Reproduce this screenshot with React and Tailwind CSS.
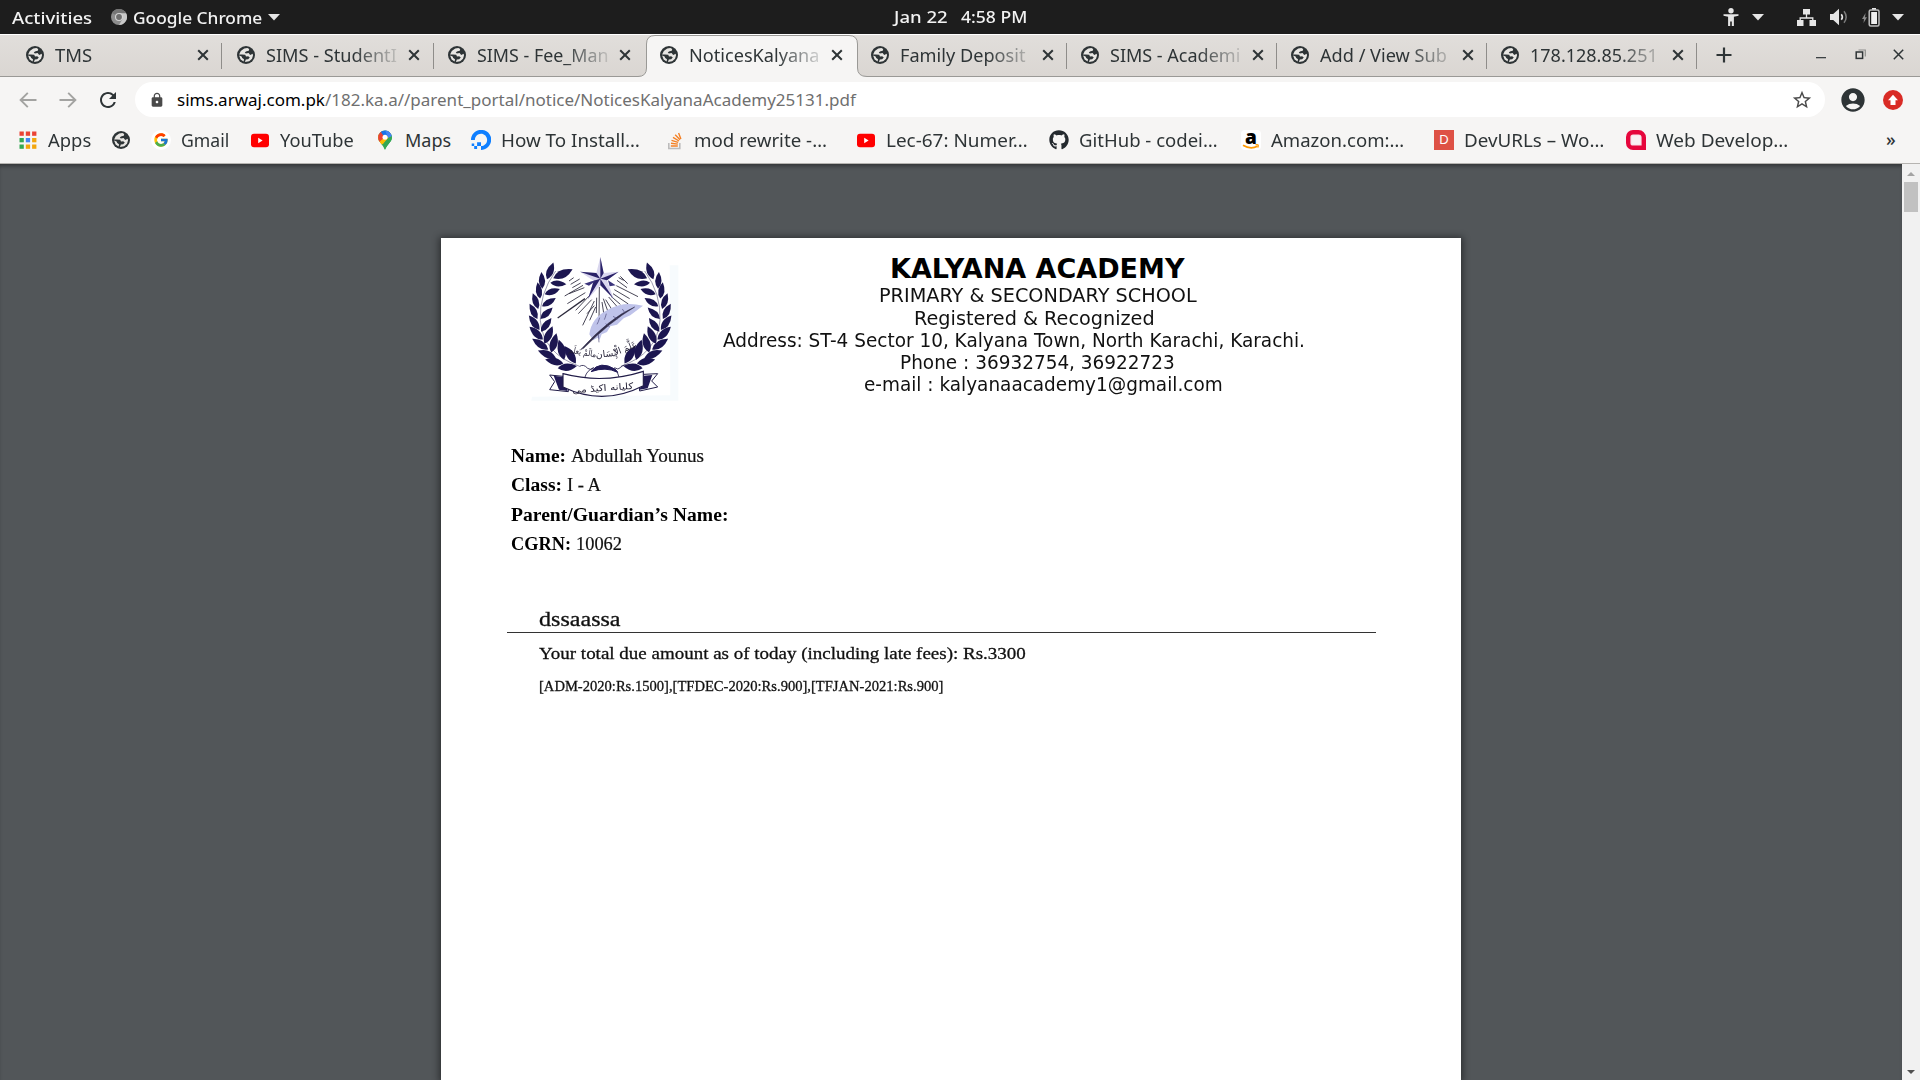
import { useLayoutEffect, useRef, useState } from "react";
import { FaGithub } from "react-icons/fa";
import { FcGoogle } from "react-icons/fc";
import { MdAccountCircle, MdLock, MdStarBorder, MdRefresh } from "react-icons/md";

const SANS = "font-['Noto_Sans',sans-serif]";

/* Single line of text stretched to an exact width. */
function Fit({ w, className = "", children }) {
  const ref = useRef(null);
  const [scale, setScale] = useState(1);
  useLayoutEffect(() => {
    if (ref.current) setScale(w / ref.current.offsetWidth);
  }, [w]);
  return (
    <span className={`block shrink-0 whitespace-nowrap ${className}`} style={{ width: w }}>
      <span ref={ref} className="inline-block origin-left" style={{ transform: `scaleX(${scale})` }}>
        {children}
      </span>
    </span>
  );
}

function Globe() {
  return (
    <svg viewBox="0 0 18 18" className="block size-[18px] shrink-0">
      <circle cx="9" cy="9" r="9" fill="#2e3436" />
      <path
        d="M10.4 2 7.200 2.600 3.800 5 2.100 8.600 5 8.500 8.200 8.700 9 10.400 11.200 10.200 12.800 11.400 11.200 13.200 8.800 13.600 8 15.900 12.200 15.200 15 12.800 16 9.400 15.700 7.800 13.200 8.900 11.600 7 8.800 7.400 7.800 6.300 9.600 5.200 11.800 4.800 12.200 3z"
        fill="#e8e6e3"
      />
      <path d="M2.100 9.600 4.600 10.400 5.200 12 7 13.200 6.600 15.500 3.600 13.400z" fill="#e8e6e3" />
    </svg>
  );
}

function Close() {
  return (
    <svg viewBox="0 0 12 12" className="block size-3" fill="none" stroke="#2e3436" strokeWidth="2">
      <path d="M1.2 1.2 10.8 10.8M10.8 1.2 1.2 10.8" />
    </svg>
  );
}

function Caret() {
  return (
    <svg viewBox="0 0 12 7" className="block h-[7px] w-3">
      <path d="M0 0h12L6 6.6z" fill="#e6e6e6" />
    </svg>
  );
}

function TopBar() {
  return (
    <div className="flex h-[34px] shrink-0 items-center bg-[#1d1d1d] text-[16.5px] font-medium leading-[34px] text-[#f2f2f2]">
      <Fit w={80} className="ml-3 pt-px">Activities</Fit>
      <svg viewBox="0 0 16 16" className="ml-[19px] block size-4">
        <circle cx="8" cy="8" r="8" fill="#8d8d8d" />
        <path d="M8 8 1 4A8 8 0 0 1 15 4.2Z" fill="#757575" />
        <path d="M8 4.2h7.1A8 8 0 0 1 8 16l3.6-6Z" fill="#c9c9c9" />
        <circle cx="8" cy="8" r="4" fill="#d4d4d4" />
        <circle cx="8" cy="8" r="2.9" fill="#6e6e6e" />
      </svg>
      <Fit w={129} className="ml-[6px] pt-px">Google Chrome</Fit>
      <span className="ml-[6px]"><Caret /></span>
      <Fit w={54} className="ml-[614px]">Jan 22</Fit>
      <Fit w={66} className="ml-[13px]">4:58 PM</Fit>
      <svg viewBox="0 0 16 18" className="ml-[696px] block h-[18px] w-4" fill="#e6e6e6">
        <circle cx="8" cy="2.8" r="2.7" />
        <path d="M.5 6.2h15v1.6l-4.6.9V18H8.8v-4.6H7.2V18H5.1V8.700L.5 7.800z" />
      </svg>
      <span className="ml-[13px]"><Caret /></span>
      <svg viewBox="0 0 19 17" className="ml-[33px] block h-[17px] w-[19px]" fill="#e6e6e6">
        <path d="M6 0h7v5.500H6zM0 11h6.500v6H0zM12.500 11H19v6h-6.500z" />
        <path d="M9.500 5v4M3.200 12V9h12.600v3" fill="none" stroke="#e6e6e6" strokeWidth="1.300" />
      </svg>
      <svg viewBox="0 0 18 18" className="ml-[14px] block size-[18px]" fill="none">
        <path d="M0 6h3.200L9 .8v16.400L3.200 12H0z" fill="#e6e6e6" />
        <path d="M11.300 6.200q2.200 2.800 0 5.600" stroke="#e6e6e6" strokeWidth="1.600" />
        <path d="M14 3.300q4.400 5.700 0 11.400" stroke="#7c7c7c" strokeWidth="1.500" />
      </svg>
      <svg viewBox="0 0 18 19" className="ml-[14px] block h-[19px] w-[18px]">
        <path d="M3.600 5 0 11h2l-.5 4L5 9.200H3z" fill="#8a8a8a" />
        <path d="M10 0h4v2h-4z" fill="#e6e6e6" />
        <rect x="7.200" y="2" width="9.800" height="16" rx="1.500" fill="none" stroke="#bdbdbd" strokeWidth="1.500" />
        <rect x="9.200" y="4" width="5.800" height="12" fill="#f0f0f0" />
      </svg>
      <span className="ml-[12px]"><Caret /></span>
    </div>
  );
}

const TABS = [
  { t: "TMS", w: 37, tab: "w-[210px]" },
  { t: "SIMS - StudentI", w: 131, tab: "w-[211px]" },
  { t: "SIMS - Fee_Man", w: 132, tab: "w-[211px]" },
  { t: "NoticesKalyana", w: 131, tab: "w-[211px]", active: true },
  { t: "Family Deposit", w: 125, tab: "w-[210px]" },
  { t: "SIMS - Academi", w: 130, tab: "w-[210px]" },
  { t: "Add / View Sub", w: 127, tab: "w-[210px]" },
  { t: "178.128.85.251", w: 128, tab: "w-[210px]" },
];

function Tab({ tab, sep }) {
  return (
    <div className={`relative flex h-[42px] shrink-0 items-center ${tab.tab}`}>
      {tab.active && (
        <svg viewBox="0 0 229 43" className="absolute -left-2 top-0 h-[43px] w-[229px]">
          <path
            d="M0 43V41.500Q8 41.500 8.500 33V9Q8.500 .5 17 .5H211Q219.500 .5 219.500 9V33Q220 41.500 229 41.500V43Z"
            fill="#f6f5f4"
          />
          <path
            d="M0 41.500Q8.500 41.500 8.500 33V9Q8.500 .5 17 .5H211Q219.500 .5 219.500 9V33Q219.500 41.500 229 41.500"
            fill="none"
            stroke="#9a9996"
          />
        </svg>
      )}
      <div className="relative ml-[14px] mb-[2px]"><Globe /></div>
      <div
        className={
          "relative mb-[2px] ml-[11px] w-[134px] overflow-hidden text-[18px] leading-[40px] text-[#2e3436]" +
          (tab.t === "TMS" ? "" : " [mask-image:linear-gradient(to_right,black_65%,transparent_104%)]")
        }
      >
        <Fit w={tab.w}>{tab.t}</Fit>
      </div>
      <div className="relative mb-[2px] ml-[8px]"><Close /></div>
      {sep && <div className="absolute right-0 top-[8px] h-[26px] w-px bg-[#8f8d8a]" />}
    </div>
  );
}

function TabStrip() {
  return (
    <div className="flex h-[43px] shrink-0 border-t border-white bg-linear-to-b from-[#e1dedb] to-[#dad6d2] pl-[12px] shadow-[inset_0_-1px_0_#9a9996]">
      {TABS.map((tab, i) => (
        <div key={tab.t} className={i === 3 || i === 1 ? "pl-px" : ""}>
          <Tab tab={tab} sep={i !== 2 && i !== 3} />
        </div>
      ))}
      <svg viewBox="0 0 16 16" className="ml-[19px] mt-[12px] block size-4" stroke="#2e3436" strokeWidth="2.2">
        <path d="M8 .5v15M.5 8h15" />
      </svg>
      <svg viewBox="0 0 10 10" className="ml-[84px] mt-[15px] block size-[10px]">
        <path d="M0 7h10v1.300H0z" fill="#3d4244" />
      </svg>
      <svg viewBox="0 0 11 11" className="ml-[29px] mt-[14px] block size-[11px]" fill="none">
        <path d="M3.500 1h6.800v6.500" stroke="#8e8e8c" strokeWidth="1.200" />
        <rect x="1.200" y="3" width="6.400" height="6.400" stroke="#2e3436" strokeWidth="1.500" />
      </svg>
      <svg viewBox="0 0 11 11" className="ml-[27px] mt-[14px] block size-[11px]" stroke="#2e3436" strokeWidth="1.500">
        <path d="M.8.8 10.200 10.200M10.200.8.8 10.200" />
      </svg>
    </div>
  );
}

function AddressRow() {
  return (
    <div className="flex h-[45px] shrink-0 items-center">
      <svg viewBox="0 0 18 16" className="ml-[19px] block h-4 w-[18px]" fill="none" stroke="#a3a3a1" strokeWidth="1.900">
        <path d="M17.500 8H2M8.800.8 1.600 8l7.200 7.200" />
      </svg>
      <svg viewBox="0 0 18 16" className="ml-[22px] block h-4 w-[18px]" fill="none" stroke="#a3a3a1" strokeWidth="1.900">
        <path d="M.5 8H16M9.200.8 16.400 8l-7.200 7.200" />
      </svg>
      <MdRefresh className="ml-[19px] size-6 text-[#2e3436]" />
      <div className="ml-[15px] flex h-[35px] w-[1690px] items-center rounded-full bg-white">
        <MdLock className="ml-[14px] size-[16px] text-[#4a4a4a]" />
        <Fit w={679} className="ml-[12px] text-[17px] leading-[35px] text-[#6f6f6f]">
          <span className="text-black">sims.arwaj.com.pk</span>/182.ka.a//parent_portal/notice/NoticesKalyanaAcademy25131.pdf
        </Fit>
        <MdStarBorder className="ml-[935px] size-[22px] text-[#4a4a4a]" />
      </div>
      <MdAccountCircle className="ml-[14px] size-[28px] text-[#2e3436]" />
      <svg viewBox="0 0 20 20" className="ml-[16px] block size-5">
        <circle cx="10" cy="10" r="10" fill="#d92b25" />
        <path d="M10 4.800 15 10.200h-2.500V15h-5v-4.800H5z" fill="white" />
      </svg>
    </div>
  );
}

function AppsIcon() {
  const colors = ["#ea4335", "#ea4335", "#ea4335", "#34a853", "#4285f4", "#f2a60d", "#34a853", "#f2a60d", "#f2a60d"];
  return (
    <svg viewBox="0 0 20 20" className="block size-5">
      {colors.map((c, i) => (
        <rect key={i} x={1.500 + (i % 3) * 6.300} y={1.500 + Math.floor(i / 3) * 6.500} width="4.300" height="4.300" fill={c} />
      ))}
    </svg>
  );
}

function YouTubeIcon() {
  return (
    <svg viewBox="0 0 20 20" className="block size-5">
      <rect x="1" y="3.800" width="18" height="13.400" rx="3" fill="#f00" />
      <path d="M8.200 7.800v5.400L12.600 10.500z" fill="white" />
    </svg>
  );
}

function MapsIcon() {
  return (
    <svg viewBox="0 0 20 20" className="block size-5">
      <defs>
        <clipPath id="pin">
          <path d="M10 .6a6.900 6.900 0 0 1 6.900 6.900c0 4.700-4.500 6-6.900 12.300C7.600 13.500 3.100 12.200 3.100 7.500A6.900 6.900 0 0 1 10 .6z" />
        </clipPath>
      </defs>
      <g clipPath="url(#pin)">
        <path d="M0 0h20v20H0z" fill="#34a853" />
        <path d="M0 3 10 7.500 3 16H0z" fill="#fbbc04" />
        <path d="M12 0h8L8 14 3 16z" fill="#fbbc04" />
        <path d="M20 2v18H8L10 12z" fill="#34a853" />
        <path d="M0 0h6L9.500 7.500 4 12H0z" fill="#ea4335" />
        <path d="M4.500 0H20L10 8z" fill="#1a73e8" />
        <path d="M10 0h10v4.500L13 8z" fill="#4285f4" />
      </g>
      <circle cx="10" cy="7.300" r="2.500" fill="white" />
    </svg>
  );
}

function OceanIcon() {
  return (
    <svg viewBox="0 0 20 20" className="block size-5" fill="#0f7fff">
      <path d="M10 20v-3.900c4.100 0 7.300-4.100 5.700-8.400a5.800 5.800 0 0 0-3.400-3.500C8 2.600 3.900 5.800 3.900 9.900H0C0 3.300 6.400-1.800 13.300.3c3 .9 5.400 3.300 6.400 6.300C21.800 13.500 16.600 20 10 20z" />
      <path d="M6.100 12.200H10v3.900H6.100zM3.200 16.100h2.900v3H3.200zM.7 13.600h2.500v2.500H.7z" />
    </svg>
  );
}

function StackIcon() {
  return (
    <svg viewBox="0 0 20 20" className="block size-5" fill="none">
      <path d="M4.800 13v5.500h11V13" stroke="#bcbbbb" strokeWidth="1.600" />
      <path d="M6.800 16h7M7 13.200l6.900.9M7.500 10.300l6.700 2M9 7.400l6 3.600M11.200 4.800l4.800 5M14.600 3l2.300 6" stroke="#f48024" strokeWidth="1.400" />
    </svg>
  );
}

function AmazonIcon() {
  return (
    <div className="relative size-5 overflow-hidden rounded-[4px] bg-white">
      <span className="absolute inset-x-0 -top-[3px] text-center font-['Open_Sans',sans-serif] text-[19px] font-extrabold leading-[20px] text-black">a</span>
      <svg viewBox="0 0 20 20" className="absolute inset-0 size-5" fill="none" stroke="#ff9900">
        <path d="M2 15.300q7.500 4.500 14.500 1" strokeWidth="1.700" />
        <path d="M14.500 14.800q4-1 2.300 2.800" strokeWidth="1.300" />
      </svg>
    </div>
  );
}

function DevIcon() {
  return (
    <div className="size-5 bg-[#de5145] text-center font-['Liberation_Sans',sans-serif] text-[13px] leading-[20px] text-white">D</div>
  );
}

function WebIcon() {
  return (
    <svg viewBox="0 0 20 20" className="block size-5" fill="none">
      <path d="M7 2.200h5.500a5.300 5.300 0 0 1 5.300 5.300v10.300H7A4.800 4.800 0 0 1 2.200 13V7A4.800 4.800 0 0 1 7 2.200z" fill="#f8dfe6" stroke="#e6063c" strokeWidth="4.400" />
      <rect x="5.500" y="5.500" width="9" height="9" rx="1.500" fill="#f9f0f2" />
    </svg>
  );
}

const BOOKMARKS = [
  { icon: <AppsIcon />, t: "Apps", w: 43, item: "w-[93px]" },
  { icon: <div className="p-px"><Globe /></div>, item: "w-[40px]" },
  { icon: <div className="size-5 rounded-full bg-white p-[2px]"><FcGoogle className="size-4" /></div>, t: "Gmail", w: 48, item: "w-[99px]" },
  { icon: <YouTubeIcon />, t: "YouTube", w: 74, item: "w-[125px]" },
  { icon: <MapsIcon />, t: "Maps", w: 46, item: "w-[96px]" },
  { icon: <OceanIcon />, t: "How To Install…", w: 139, item: "w-[193px]" },
  { icon: <StackIcon />, t: "mod rewrite -…", w: 133, item: "w-[192px]" },
  { icon: <YouTubeIcon />, t: "Lec-67: Numer…", w: 142, item: "w-[193px]" },
  { icon: <FaGithub className="size-5 text-[#24292e]" />, t: "GitHub - codei…", w: 139, item: "w-[192px]" },
  { icon: <AmazonIcon />, t: "Amazon.com:…", w: 133, item: "w-[193px]" },
  { icon: <DevIcon />, t: "DevURLs – Wo…", w: 140, item: "w-[192px]" },
  { icon: <WebIcon />, t: "Web Develop…", w: 132, item: "w-[260px]" },
];

function Bookmarks() {
  return (
    <div className="flex h-[42px] shrink-0 items-center border-b border-[#b6b4b1] pb-[5px] pl-[18px] text-[18px] leading-[36px] text-[#2e3436]">
      {BOOKMARKS.map((b, i) => (
        <div key={i} className={`flex shrink-0 items-center gap-[10px] ${b.item}`}>
          <div className="size-5 shrink-0">{b.icon}</div>
          {b.t && <Fit w={b.w}>{b.t}</Fit>}
        </div>
      ))}
      <Fit w={10} className="-mt-[3px] text-[18px] font-medium">»</Fit>
    </div>
  );
}

/* Each leaf: x, y, angle, half length. */
const LEAVES = [
  [152, 122, -68, 27], [127, 150, -92, 25], [118, 180, -98, 25], [108, 212, -108, 25], [102, 243, -116, 26],
  [104, 277, -125, 27], [110, 308, -135, 28], [122, 341, -145, 29], [142, 371, -157, 29], [164, 393, -166, 28], [203, 411, -6, 29],
  [190, 131, -24, 32], [176, 160, 6, 24], [158, 184, -18, 24], [148, 216, -30, 24], [141, 249, -42, 25],
  [140, 284, -52, 26], [147, 314, -64, 29], [163, 338, -74, 30], [186, 358, -104, 31], [212, 373, -122, 31],
];

function Wreath() {
  return (
    <g>
      <path d="M168 122Q118 190 122 270Q130 370 240 408" fill="none" stroke="#3a3660" strokeWidth="1.500" />
      {LEAVES.map(([x, y, a, l], i) => (
        <path
          key={i}
          transform={`translate(${x} ${y}) rotate(${a}) scale(${l / 25})`}
          d="M-25 0Q-6 -19 25 -1Q-2 19 -25 0Z"
          fill="#1c1650"
        />
      ))}
    </g>
  );
}

const RAYS = [
  [[208, 152], [222, 142]], [[213, 162], [240, 146]], [[218, 172], [243, 158]], [[195, 197], [250, 165]],
  [[208, 190], [254, 172]], [[203, 220], [257, 187]], [[228, 240], [270, 195]], [[236, 250], [276, 208]],
  [[249, 285], [284, 212]], [[262, 250], [284, 226]], [[270, 270], [288, 230]], [[290, 248], [291, 202]],
  [[298, 280], [299, 170]], [[313, 255], [307, 215]], [[327, 250], [311, 205]], [[340, 243], [318, 208]],
  [[355, 232], [327, 200]], [[362, 222], [334, 198]], [[386, 221], [340, 190]], [[390, 205], [344, 178]],
  [[415, 199], [350, 166]], [[382, 172], [352, 150]], [[372, 150], [357, 142]], [[384, 160], [362, 138]],
];

function Emblem() {
  return (
    <svg viewBox="85 65 456 456" className="block size-[152px] shrink-0 blur-[0.3px]">
      <path d="M510 105h26v406H95l2-12 415-4z" fill="#f7fbfd" />
      <Wreath />
      <g transform="translate(603 0) scale(-1 1)"><Wreath /></g>
      <g stroke="#2c2a3c" strokeWidth="2.600">
        {RAYS.map(([a, b], i) => (
          <line key={i} x1={a[0]} y1={a[1]} x2={b[0]} y2={b[1]} />
        ))}
        <path d="M174 263 256 205" strokeWidth="4" />
      </g>
      <g>
        <path d="M302 80 312 128 357 124 322 150 342 205 302 165 265 206 282 151 241 124 290 128Z" fill="#d9d6ee" />
        <path d="M302 80 312 128 302 145ZM357 124 322 150 302 145ZM342 205 302 165 302 145ZM265 206 282 151 302 145ZM241 124 290 128 302 145Z" fill="#2a2268" />
        <path d="M254 160 276 153 290 150 268 166ZM325 150 348 165 330 168Z" fill="#3b347c" />
      </g>
      <path d="M430 226Q370 212 325 238Q275 262 269 312L280 330 294 322 300 328 306 312 322 305 332 288 352 283 372 264 392 255Z" fill="#bfc3ea" />
      <path d="M405 230Q330 262 244 357L252 354Q330 275 405 230Z" fill="#332f4c" stroke="#332f4c" strokeWidth="1.500" />
      <path d="M300 262q-4 14-8 20M320 250q-3 12-6 18M340 258l14 8M318 280l12 10M296 312l2 24M368 236l8 12" fill="none" stroke="#4c4878" strokeWidth="2" />
      <g fill="#201d33" className="font-['DejaVu_Sans',sans-serif]" textAnchor="middle">
        <text x="380" y="362" fontSize="27" textLength="72" lengthAdjust="spacingAndGlyphs" transform="rotate(-22 380 362)">عَلَّمَ الْإِ</text>
        <text x="320" y="380" fontSize="28" textLength="62" lengthAdjust="spacingAndGlyphs" transform="rotate(-6 320 380)">نْسَان</text>
        <text x="247" y="374" fontSize="27" textLength="84" lengthAdjust="spacingAndGlyphs" transform="rotate(10 247 374)">مالَمْ يَعلَم</text>
      </g>
      <g fill="none" stroke="#221d48" strokeWidth="2.500">
        <path d="M240 408q12-8 24 6q10 8 18-2M282 412Q262 420 256 440M362 412q-6 8-18 0M362 412q10-12 28-6M344 414q10 8 14 26" />
      </g>
      <path d="M274 424Q302 388 348 418L354 426Q318 408 274 424Z" fill="#221b58" stroke="#221b58" strokeWidth="3" />
      <path d="M190 438 150 434 165 454 150 478 206 484 206 470ZM432 432 474 430 456 452 474 470 420 482 418 462Z" fill="white" stroke="#211c48" strokeWidth="3" />
      <path d="M162 436 190 440 204 482 178 478ZM458 434 432 436 420 478 444 474Z" fill="#211a55" />
      <path d="M190 430Q310 462 431 423V466Q310 528 190 470Z" fill="white" stroke="#211c48" strokeWidth="3.500" />
      <text x="310" y="482" fontSize="27" fill="#201d33" textAnchor="middle" textLength="184" lengthAdjust="spacingAndGlyphs" transform="rotate(-4 310 482)" className="font-['DejaVu_Sans',sans-serif]">كليانه اكيڈ مى</text>
    </svg>
  );
}

function Letterhead() {
  return (
    <div className="flex pl-[87px] pt-[14px]">
      <Emblem />
      <div className="ml-[43px] flex w-[582px] flex-col text-[19px] text-[#111] font-['DejaVu_Sans',sans-serif]">
        <Fit w={294} className="ml-[167px] mt-[2px] text-[27px] font-bold leading-[30px] text-black">KALYANA ACADEMY</Fit>
        <Fit w={318} className="ml-[156px] leading-[23px]">PRIMARY &amp; SECONDARY SCHOOL</Fit>
        <Fit w={241} className="ml-[191px] leading-[23px]">Registered &amp; Recognized</Fit>
        <Fit w={582} className="-mt-px leading-[22px]">Address: ST-4 Sector 10, Kalyana Town, North Karachi, Karachi.</Fit>
        <Fit w={275} className="ml-[177px] leading-[22px]">Phone : 36932754, 36922723</Fit>
        <Fit w={359} className="ml-[141px] leading-[22px]">e-mail : kalyanaacademy1@gmail.com</Fit>
      </div>
    </div>
  );
}

const FIELDS = [
  { k: "Name:", kw: 55, v: "Abdullah Younus", vw: 133 },
  { k: "Class:", kw: 51, v: "I - A", vw: 34 },
  { k: "Parent/Guardian’s Name:", kw: 218 },
  { k: "CGRN:", kw: 60, v: "10062", vw: 46 },
];

function Page() {
  return (
    <div className="mx-auto mt-[74px] h-[842px] w-[1020px] bg-white text-[#111] shadow-[0_1px_7px_2px_rgba(0,0,0,0.45)]">
      <Letterhead />
      <div className="ml-[70px] mt-[38px] font-['Liberation_Serif',serif] text-[18px]">
        {FIELDS.map((f) => (
          <div key={f.k} className="flex h-[29.300px] items-center gap-[5px] leading-[29px]">
            <Fit w={f.kw} className="font-bold text-black">{f.k}</Fit>
            {f.v && <Fit w={f.vw} className="[-webkit-text-stroke:0.2px_#111]">{f.v}</Fit>}
          </div>
        ))}
      </div>
      <div className="ml-[66px] mt-[47px] w-[869px] font-['Liberation_Serif',serif] [-webkit-text-stroke:0.3px_#111]">
        <div className="border-b border-[#333] pl-[32px] text-[20.500px] leading-[26px]">
          <Fit w={81}>dssaassa</Fit>
        </div>
        <Fit w={487} className="ml-[32px] mt-[6px] text-[17.500px] leading-[28px]">
          Your total due amount as of today (including late fees): Rs.3300
        </Fit>
        <Fit w={404} className="ml-[32px] mt-[7px] text-[14.500px] leading-[24px]">
          [ADM-2020:Rs.1500],[TFDEC-2020:Rs.900],[TFJAN-2021:Rs.900]
        </Fit>
      </div>
    </div>
  );
}

function Viewer() {
  return (
    <div className="flex min-h-0 flex-1 bg-[#525659]">
      <div className="w-[1902px] overflow-hidden shadow-[inset_0_4px_4px_-2px_rgba(0,0,0,0.4)]">
        <Page />
      </div>
      <div className="flex w-[18px] flex-col items-center bg-[#f1f1f1]">
        <svg viewBox="0 0 8 4" className="mt-2 block h-1 w-2"><path d="M4 0 8 4H0z" fill="#a3a3a3" /></svg>
        <div className="mt-[6px] h-[30px] w-[14px] bg-[#c1c1c1]" />
        <svg viewBox="0 0 8 4" className="mb-[6px] mt-auto block h-1 w-2"><path d="M0 0h8L4 4z" fill="#505050" /></svg>
      </div>
    </div>
  );
}

export default function App() {
  return (
    <div className={`flex h-[1080px] w-[1920px] flex-col overflow-hidden bg-[#f6f5f4] ${SANS}`}>
      <TopBar />
      <TabStrip />
      <AddressRow />
      <Bookmarks />
      <Viewer />
    </div>
  );
}
